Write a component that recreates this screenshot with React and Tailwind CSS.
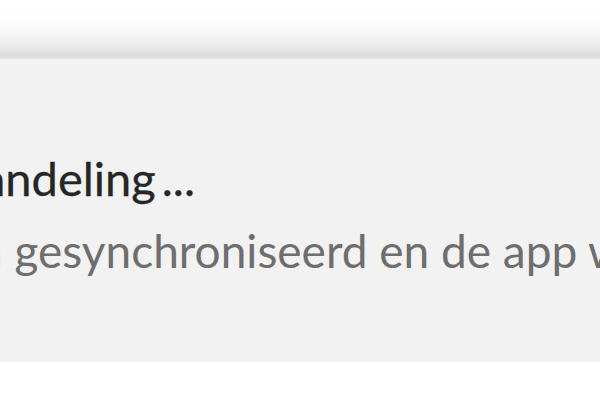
import React from 'react';

export default function App() {
  return (
    <div className="w-[600px] h-[400px] overflow-hidden bg-white" style={{ fontFamily: 'Lato, "Open Sans", sans-serif' }}>
      <div className="h-[59px] bg-[linear-gradient(to_bottom,#ffffff_0px,#fefefe_20px,#f7f7f7_34px,#e9e9e9_47px,#dadada_56px,#e4e4e4_58px)]" />
      <div className="h-[303px] bg-[#f2f2f2] pt-[95px] overflow-hidden">
        <div className="-ml-[18px] whitespace-nowrap text-[47px] leading-[48px] text-[#262626] [-webkit-text-stroke:0.3px_#262626]">
          andeling<span className="ml-[6px]">...</span>
        </div>
        <div className="-ml-[23px] mt-[25px] whitespace-nowrap text-[46px] leading-[48px] text-[#6e6e6e]">
          n gesynchroniseerd en de app wordt
        </div>
      </div>
    </div>
  );
}
